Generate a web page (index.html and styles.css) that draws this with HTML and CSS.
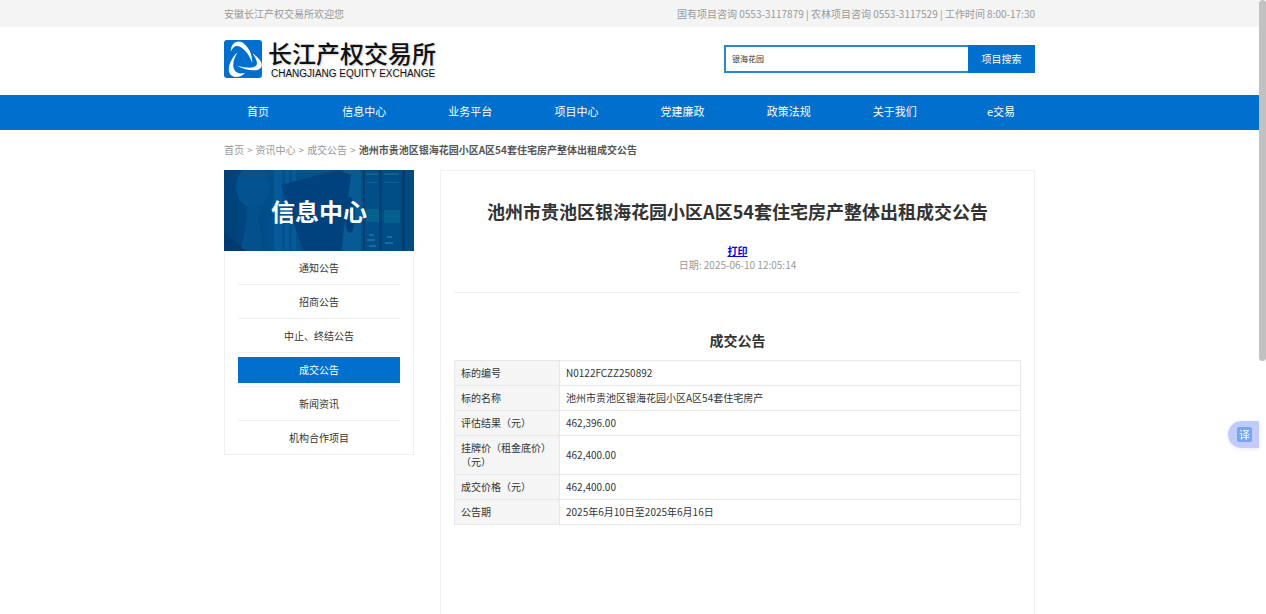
FILE: index.html
```
<!DOCTYPE html>
<html lang="zh-CN">
<head>
<meta charset="utf-8">
<title>成交公告 - 长江产权交易所</title>
<link rel="stylesheet" href="styles.css">
</head>
<body>
<div class="topbar">
  <div class="container topbar-inner">
    <span>安徽长江产权交易所欢迎您</span>
    <span>国有项目咨询 0553-3117879 | 农林项目咨询 0553-3117529 | 工作时间 8:00-17:30</span>
  </div>
</div>
<header class="container header">
  <a class="logo" href="#">
    <svg class="logo-mark" viewBox="0 0 112 112" aria-hidden="true">
      <rect width="112" height="112" rx="9" fill="#006fcd"/>
      <path d="M20 34C20 8 42 -4 60 12C76 26 84 46 83 68C76 46 64 32 52 23C38 13 27 18 20 34Z" fill="#fff"/>
      <path d="M40 36C28 56 24 74 30 87C36 99 48 100 62 97C46 114 20 112 15 94C11 76 22 52 40 36Z" fill="#fff"/>
      <path d="M84 40C102 50 116 68 110 80C102 94 70 92 38 76C66 83 88 84 95 75C101 67 94 54 84 40Z" fill="#fff"/>
    </svg>
    <span class="logo-text">
      <span class="logo-cn">长江产权交易所</span>
      <span class="logo-en">CHANGJIANG EQUITY EXCHANGE</span>
    </span>
  </a>
  <form class="search">
    <input class="search-input" type="text" value="银海花园" aria-label="项目搜索">
    <button class="search-button" type="button">项目搜索</button>
  </form>
</header>
<nav class="nav">
  <div class="container nav-inner">
    <a href="#">首页</a>
    <a href="#">信息中心</a>
    <a href="#">业务平台</a>
    <a href="#">项目中心</a>
    <a href="#">党建廉政</a>
    <a href="#">政策法规</a>
    <a href="#">关于我们</a>
    <a href="#">e交易</a>
  </div>
</nav>
<div class="container breadcrumb">
  <a href="#">首页</a><span>&gt;</span><a href="#">资讯中心</a><span>&gt;</span><a href="#">成交公告</a><span>&gt;</span><strong>池州市贵池区银海花园小区A区54套住宅房产整体出租成交公告</strong>
</div>
<div class="container content">
  <aside class="sidebar">
    <div class="banner">
      <svg class="banner-art" viewBox="0 0 190 81" preserveAspectRatio="none" aria-hidden="true">
        <defs>
          <linearGradient id="shade" x1="0" x2="1" y1="0" y2="0">
            <stop offset="0" stop-color="#004079"/>
            <stop offset=".3" stop-color="#00528f"/>
            <stop offset=".7" stop-color="#00508c"/>
            <stop offset="1" stop-color="#004b80"/>
          </linearGradient>
        </defs>
        <rect width="190" height="81" fill="url(#shade)"/>
        <ellipse cx="29" cy="17" rx="17" ry="21" fill="#04528f"/>
        <path d="M22 38h17l-4 8 3 35H17l6-35z" fill="#04508c"/>
        <path d="M0 62l22 19H0z" fill="#003a72"/>
        <path d="M50 0h8v81h-8zM61 0h4v81h-4zM68 0h4v81h-4z" fill="#065a98"/>
        <path d="M119 0h18v81h-18z" fill="#075a94"/>
        <path d="M57 15L114 0l13 5-10 76H79z" fill="#00427e"/>
        <ellipse cx="126" cy="45" rx="5" ry="18" fill="#004078"/>
        <path d="M139 0h2v81h-2zM155 0h3v81h-3zM178 0h3v81h-3z" fill="#003f70"/>
        <path d="M142 3h12v2h-12zM160 3h15v2h-15zM142 12h12v1h-12zM160 12h15v1h-15z" fill="#0f6199"/>
        <path d="M142 39h13v13h-13zM160 40h16v13h-16z" fill="#04608c"/>
        <path d="M145 64h5v2h-5zM143 69h8v2h-8zM145 75h7v2h-7zM163 66h5v2h-5zM161 72h8v2h-8z" fill="#1b6ba0"/>
      </svg>
      <h2>信息中心</h2>
    </div>
    <ul class="menu">
      <li><a href="#">通知公告</a></li>
      <li><a href="#">招商公告</a></li>
      <li><a href="#">中止、终结公告</a></li>
      <li><a class="active" href="#">成交公告</a></li>
      <li><a href="#">新闻资讯</a></li>
      <li><a href="#">机构合作项目</a></li>
    </ul>
  </aside>
  <main class="article">
    <div class="article-head">
      <h1>池州市贵池区银海花园小区A区54套住宅房产整体出租成交公告</h1>
      <a class="print" href="#">打印</a>
      <span class="date">日期: 2025-06-10 12:05:14</span>
    </div>
    <h3>成交公告</h3>
    <table class="details">
      <tr><th scope="row">标的编号</th><td>N0122FCZZ250892</td></tr>
      <tr><th scope="row">标的名称</th><td>池州市贵池区银海花园小区A区54套住宅房产</td></tr>
      <tr><th scope="row">评估结果（元）</th><td>462,396.00</td></tr>
      <tr><th scope="row">挂牌价（租金底价）（元）</th><td>462,400.00</td></tr>
      <tr><th scope="row">成交价格（元）</th><td>462,400.00</td></tr>
      <tr><th scope="row">公告期</th><td>2025年6月10日至2025年6月16日</td></tr>
    </table>
  </main>
</div>
<button class="translate" type="button" aria-label="翻译"><span>译</span></button>
<div class="scrollbar" aria-hidden="true"></div>
</body>
</html>
```
FILE: styles.css
```
* {
  box-sizing: border-box;
}

body {
  display: flex;
  flex-direction: column;
  min-height: 100vh;
  margin: 0;
  padding-right: 7px;
  background: #fff;
  color: #333;
  font-family: "Noto Sans CJK SC", "Noto Sans", sans-serif;
  font-size: 10px;
  line-height: 14px;
}

a {
  color: inherit;
  text-decoration: none;
}

h1,
h2,
h3 {
  margin: 0;
}

.container {
  width: 100%;
  max-width: 811px;
  margin: 0 auto;
}

.topbar {
  background: #f4f4f4;
  color: #999;
}

.topbar-inner {
  display: flex;
  justify-content: space-between;
  align-items: center;
  height: 27px;
}

.header {
  display: flex;
  justify-content: space-between;
  align-items: center;
  height: 68px;
  padding-bottom: 5px;
}

.logo {
  display: flex;
  align-items: center;
  gap: 6px;
  color: #111;
}

.logo-mark {
  width: 38px;
  height: 38px;
}

.logo-text {
  display: flex;
  flex-direction: column;
  text-shadow: 1px 1px 2px #ccc;
}

.logo-cn {
  font-size: 24px;
  font-weight: 500;
  line-height: 31px;
}

.logo-en {
  padding-left: 3px;
  font-family: "Liberation Sans", Arial, sans-serif;
  font-size: 10px;
  line-height: 12px;
}

.search {
  display: flex;
  width: 311px;
  height: 28px;
}

.search-input {
  flex: 1;
  min-width: 0;
  padding: 0 6px;
  border: 2px solid #2b84d4;
  border-right: 0;
  border-radius: 0;
  color: #333;
  font-family: inherit;
  font-size: 8px;
  outline: 0;
}

.search-button {
  width: 67px;
  padding: 0;
  border: 0;
  background: #006fcd;
  color: #fff;
  font-family: inherit;
  font-size: 10px;
}

.nav {
  background: #006fcd;
  color: #fff;
  font-size: 11px;
}

.nav-inner {
  display: flex;
  justify-content: space-between;
  align-items: center;
  height: 35px;
  padding-bottom: 3px;
}

.nav-inner a {
  width: 68px;
  text-align: center;
}

.breadcrumb {
  display: flex;
  align-items: center;
  gap: 3px;
  height: 40px;
  color: #999;
}

.breadcrumb strong {
  color: #555;
}

.content {
  flex: 1;
  display: flex;
  align-items: flex-start;
  gap: 26px;
}

.sidebar {
  width: 190px;
}

.banner {
  position: relative;
  display: flex;
  justify-content: center;
  align-items: center;
  height: 81px;
}

.banner-art {
  position: absolute;
  inset: 0;
  width: 100%;
  height: 100%;
}

.banner h2 {
  position: relative;
  color: #fff;
  font-size: 24px;
  line-height: 32px;
}

.menu {
  margin: 0;
  padding: 0 13px;
  border: 1px solid #f0f0f0;
  border-top: 0;
  list-style: none;
}

.menu li {
  height: 34px;
  padding: 4px 0 3px;
  border-bottom: 1px solid #f0f0f0;
}

.menu li:last-child {
  height: 33px;
  border-bottom: 0;
}

.menu a {
  display: block;
  line-height: 26px;
  text-align: center;
}

.menu .active {
  background: #006fcd;
  color: #fff;
}

.article {
  flex: 1;
  align-self: stretch;
  padding: 0 13px;
  border: 1px solid #f0f0f0;
  border-bottom: 0;
}

.article-head {
  display: flex;
  flex-direction: column;
  align-items: center;
  padding: 26px 0 20px;
  border-bottom: 1px solid #eee;
}

.article h1 {
  margin-bottom: 19px;
  font-size: 18px;
  line-height: 28px;
}

.print {
  color: #00e;
  font-weight: 700;
  text-decoration: underline;
}

.date {
  color: #999;
}

.article h3 {
  padding: 37px 0 10px;
  font-size: 14px;
  line-height: 20px;
  text-align: center;
}

.details {
  width: 100%;
  border-collapse: collapse;
}

.details th,
.details td {
  padding: 5px 6px;
  border: 1px solid #e8e8e8;
  font-weight: 400;
  text-align: left;
}

.details th {
  width: 105px;
  background: #f5f5f5;
}

.translate {
  position: fixed;
  top: 421px;
  right: 7px;
  display: flex;
  align-items: center;
  width: 31px;
  height: 27px;
  padding: 0 0 0 9px;
  border: 0;
  border-radius: 14px 0 0 14px;
  background: linear-gradient(160deg, #b9cdfb, #c8c9fd);
  box-shadow: 0 1px 4px #e4e8fa;
}

.translate span {
  width: 15px;
  border-radius: 2px;
  background: #75a5f3;
  color: #fff;
  font-family: "Noto Sans CJK SC", sans-serif;
  font-size: 11px;
  line-height: 15px;
}

.scrollbar {
  position: fixed;
  top: 0;
  right: 0;
  width: 7px;
  height: 361px;
  border-radius: 4px;
  background: #c1c1c1;
}
```
